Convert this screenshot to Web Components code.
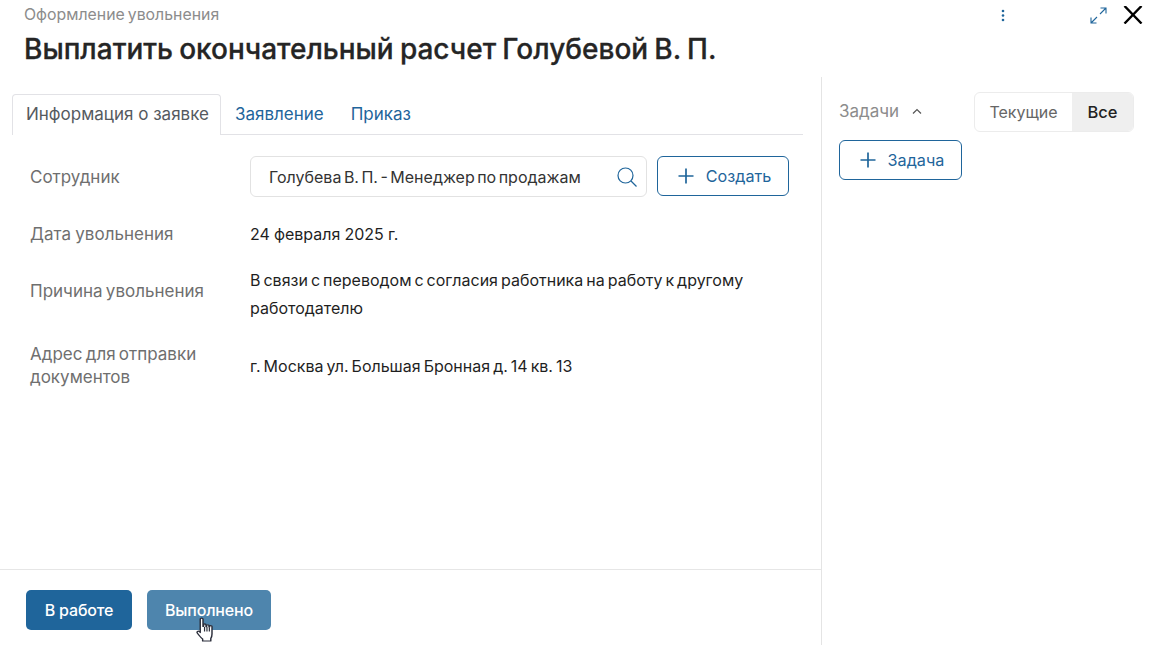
<!DOCTYPE html>
<html lang="ru">
<head>
<meta charset="utf-8">
<title>Оформление увольнения</title>
<style>
  html, body { margin: 0; background: #fff; }
  body { font-family: Inter, "Liberation Sans", sans-serif; overflow: hidden; }
</style>
</head>
<body>
<task-modal>
  <task-header slot="header" kicker="Оформление увольнения" heading="Выплатить окончательный расчет Голубевой В. П."></task-header>

  <task-tabs slot="tabs" active="Информация о заявке" items="Информация о заявке|Заявление|Приказ"></task-tabs>

  <form-row label="Сотрудник">
    <div style="display:flex;gap:10px">
      <search-field value="Голубева В. П. - Менеджер по продажам"></search-field>
      <outline-button style="width:132px">Создать</outline-button>
    </div>
  </form-row>
  <form-row label="Дата увольнения" style="margin-bottom:12px;word-spacing:-.4px">24 февраля 2025 г.</form-row>
  <form-row label="Причина увольнения" style="margin-bottom:21px;--label-pad:0 20px 6px 0">В связи с переводом с согласия работника на работу к другому работодателю</form-row>
  <form-row label="Адрес для отправки документов" style="--label-pad:0 20px 0 0">г. Москва ул. Большая Бронная д. 14 кв. 13</form-row>

  <solid-button slot="footer" style="width:106px">В работе</solid-button>
  <solid-button slot="footer" hover style="width:124px">Выполнено</solid-button>

  <tasks-panel slot="aside"></tasks-panel>
</task-modal>

<script>
const PLUS = `<svg width="16" height="16" viewBox="0 0 16 16" fill="none" stroke="currentColor" stroke-width="1.7"><path d="M8 .5v15M.5 8h15"/></svg>`;

class TaskModal extends HTMLElement {
  constructor() {
    super();
    this.attachShadow({ mode: 'open' }).innerHTML = `
      <style>
        :host { display: flex; flex-direction: column; width: 1149px; height: 645px; position: relative; overflow: hidden; }
        .body { flex: 1; display: flex; min-height: 0; }
        main { width: 821px; display: flex; flex-direction: column; border-right: 1px solid #e4e4e4; }
        .form { flex: 1; display: flex; flex-direction: column; padding: 21px 18px 0 30px; }
        footer { height: 76px; border-top: 1px solid #e6e6e6; display: flex; gap: 15px; padding: 20px 26px 0; box-sizing: border-box; }
        aside { flex: 1; padding: 15px 15px 0 17px; }
        .cursor { position: absolute; left: 194px; top: 617px; }
      </style>
      <slot name="header"></slot>
      <div class="body">
        <main>
          <slot name="tabs"></slot>
          <div class="form"><slot></slot></div>
          <footer><slot name="footer"></slot></footer>
        </main>
        <aside><slot name="aside"></slot></aside>
      </div>
      <svg class="cursor" width="24" height="26" viewBox="0 0 20 26" preserveAspectRatio="none">
        <path d="M5.2 2.2c0-1.500 2.300-1.500 2.300 0v7.300l.5-.1V7.900c0-1.300 2-1.300 2 0v1.700l.5.100V8.700c0-1.300 2-1.300 2 0v1.300l.5.100v-.6c0-1.200 2-1.200 2 .1v7.500c0 2.500-.3 3.100-1 4.400v2.500H7.200v-2.100c-1.500-1.200-2.700-3-4.500-5.900-.8-1.300.8-2.500 1.900-1.300l.6.800z" fill="#fff" stroke="#2a2d3a" stroke-width="1.200" stroke-linejoin="round"/>
        <path d="M8.800 10v4.500M10.800 10v4.500M12.800 10.500v4" stroke="#2a2d3a" stroke-width="1" fill="none"/>
      </svg>
    `;
  }
}

class TaskHeader extends HTMLElement {
  constructor() {
    super();
    this.attachShadow({ mode: 'open' });
  }

  connectedCallback() {
    this.shadowRoot.innerHTML = `
      <style>
        :host { display: flex; height: 77px; position: relative; box-sizing: border-box; padding: 5px 0 0 24px; }
        .text { flex: 1; }
        .kicker { font-size: 15.850px; line-height: 20px; color: #8c8c8c; word-spacing: -1.500px; }
        h1 { margin: 5px 0 0; font-size: 28px; line-height: 38px; font-weight: 500; color: #252525; word-spacing: -1.300px; -webkit-text-stroke: .3px #252525; }
        .tools { display: flex; align-items: flex-start; padding-top: 1px; color: #1f659b; }
        .dots { margin: 3px 85px 0 0; }
        .expand { margin: 1px 16px 0 0; }
      </style>
      <div class="text">
        <div class="kicker">${this.getAttribute('kicker')}</div>
        <h1>${this.getAttribute('heading')}</h1>
      </div>
      <div class="tools">
        <svg class="dots" width="4" height="13" viewBox="0 0 4 13" fill="currentColor"><circle cx="2" cy="2" r="1.300"/><circle cx="2" cy="6.500" r="1.300"/><circle cx="2" cy="11" r="1.300"/></svg>
        <svg class="expand" width="17" height="17" viewBox="0 0 17 17" fill="none" stroke="currentColor" stroke-width="1.100"><path d="M10 7 16 1M10.500 1H16v5.500M7 10l-6 6M1 10.500V16h5.500"/></svg>
        <svg class="close" width="20" height="18" viewBox="0 0 20 18" fill="none" stroke="#000" stroke-width="2.400" style="margin-right:6px"><path d="M1.500 0 18.500 17.500M18.500 0 1.500 17.500"/></svg>
      </div>
    `;
  }
}

class TaskTabs extends HTMLElement {
  constructor() {
    super();
    this.attachShadow({ mode: 'open' });
  }

  connectedCallback() {
    const active = this.getAttribute('active');
    const items = this.getAttribute('items').split('|');
    this.shadowRoot.innerHTML = `
      <style>
        :host { display: flex; margin: 17px 18px 0 12px; border-bottom: 1px solid #e2e2e6; height: 40px; font-size: 17px; }
        span { padding: 0 13.500px; line-height: 40px; color: #1f659b; box-sizing: border-box; height: 41px; }
        .on { color: #555a60; border: 1px solid #e2e2e6; border-bottom: 0; border-radius: 4px 4px 0 0; background: #fff; padding: 0 11px 0 13px; line-height: 38px; margin-right: .500px; }
      </style>
      ${items.map((item) => `<span class="${item === active ? 'on' : ''}">${item}</span>`).join('')}
    `;
  }
}

class FormRow extends HTMLElement {
  constructor() {
    super();
    this.attachShadow({ mode: 'open' });
  }

  connectedCallback() {
    this.shadowRoot.innerHTML = `
      <style>
        :host { display: grid; grid-template-columns: 220px 1fr; align-items: center; min-height: 41px; margin-bottom: 16px; font-size: 16px; line-height: 28px; color: #1f1f1f; word-spacing: -1.500px; }
        .label { font-size: 17px; line-height: 23px; color: #6f6f6f; padding: var(--label-pad, 2px 20px 0 0); }
      </style>
      <div class="label">${this.getAttribute('label')}</div>
      <div class="value"><slot></slot></div>
    `;
  }
}

class SearchField extends HTMLElement {
  constructor() {
    super();
    this.attachShadow({ mode: 'open' });
  }

  connectedCallback() {
    this.shadowRoot.innerHTML = `
      <style>
        :host { display: flex; align-items: center; justify-content: space-between; width: 397px; height: 41px; box-sizing: border-box; padding: 0 8px 0 18px; border: 1px solid #e2e2e2; border-radius: 6px; font-size: 16px; color: #333; word-spacing: -2px; }
        svg { color: #1f659b; }
      </style>
      <span>${this.getAttribute('value')}</span>
      <svg width="22" height="22" viewBox="0 0 22 22" fill="none" stroke="currentColor" stroke-width="1.200"><circle cx="9.500" cy="9.500" r="7.500"/><path d="m15 15 5.500 5.500"/></svg>
    `;
  }
}

class OutlineButton extends HTMLElement {
  constructor() {
    super();
    this.attachShadow({ mode: 'open' }).innerHTML = `
      <style>
        :host { display: inline-flex; align-items: center; justify-content: center; gap: 12px; height: 40px; box-sizing: border-box; padding-left: 3px; border: 1px solid #1f659b; border-radius: 6px; color: #1f659b; font-size: 16.200px; background: #fff; }
      </style>
      ${PLUS}<slot></slot>
    `;
  }
}

class SolidButton extends HTMLElement {
  constructor() {
    super();
    this.attachShadow({ mode: 'open' }).innerHTML = `
      <style>
        :host { display: inline-flex; align-items: center; justify-content: center; height: 40px; border-radius: 5px; background: #1f659b; color: #fff; font-size: 16px; font-weight: 500; letter-spacing: -.150px; }
        :host([hover]) { background: #4e85ad; }
      </style>
      <slot></slot>
    `;
  }
}

class TasksPanel extends HTMLElement {
  constructor() {
    super();
    this.attachShadow({ mode: 'open' }).innerHTML = `
      <style>
        :host { display: block; }
        .top { display: flex; align-items: center; justify-content: space-between; height: 40px; margin-bottom: 8px; }
        .title { display: flex; align-items: center; gap: 13px; font-size: 17px; color: #8c8c8c; padding-bottom: 2px; }
        .seg { display: flex; height: 40px; box-sizing: border-box; border: 1px solid #ececec; border-radius: 6px; font-size: 16px; overflow: hidden; }
        .seg span { display: flex; align-items: center; justify-content: center; }
        .cur { width: 97px; color: #666; }
        .all { width: 61px; background: #efefef; color: #222; font-weight: 500; font-size: 16.500px; }
      </style>
      <div class="top">
        <div class="title">Задачи
          <svg width="10" height="6" viewBox="0 0 10 6" fill="none" stroke="#555" stroke-width="1.200"><path d="m1 5.500 4-4 4 4"/></svg>
        </div>
        <div class="seg"><span class="cur">Текущие</span><span class="all">Все</span></div>
      </div>
      <outline-button style="width:123px">Задача</outline-button>
    `;
  }
}

customElements.define('task-modal', TaskModal);
customElements.define('task-header', TaskHeader);
customElements.define('task-tabs', TaskTabs);
customElements.define('form-row', FormRow);
customElements.define('search-field', SearchField);
customElements.define('outline-button', OutlineButton);
customElements.define('solid-button', SolidButton);
customElements.define('tasks-panel', TasksPanel);
</script>
</body>
</html>
